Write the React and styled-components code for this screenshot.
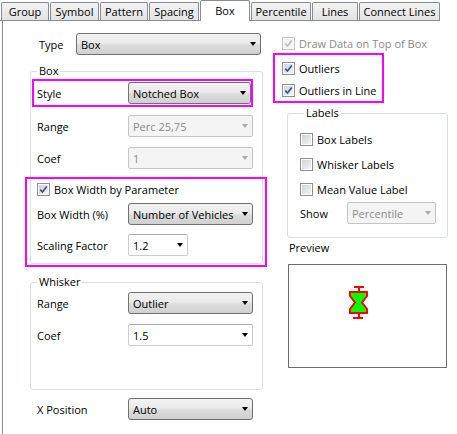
import React from 'react';
import styled, { createGlobalStyle } from 'styled-components';

const GlobalStyle = createGlobalStyle`
  html, body { margin: 0; padding: 0; background: #fff; }
  body {
    font-family: 'Segoe UI', 'Open Sans', 'Noto Sans', sans-serif;
    font-size: 11px;
    color: #000;
  }
  * { box-sizing: border-box; }
`;

const tabs = [
  { name: 'Group', width: 48 },
  { name: 'Symbol', width: 49 },
  { name: 'Pattern', width: 48 },
  { name: 'Spacing', width: 50 },
  { name: 'Box', width: 50, active: true },
  { name: 'Percentile', width: 60 },
  { name: 'Lines', width: 46 },
  { name: 'Connect Lines', width: 81 },
];

const Page = styled.div`
  width: 457px;
  height: 434px;
  overflow: hidden;
`;

const TabStrip = styled.div`
  display: flex;
  align-items: flex-end;
  gap: 1px;
  width: 440px;
  height: 21px;
  padding-left: 1px;
  border-bottom: 1px solid #898c95;
`;

const Tab = styled.div`
  width: ${p => p.$width}px;
  height: ${p => (p.$active ? 21 : 18)}px;
  margin-bottom: ${p => (p.$active ? -1 : 0)}px;
  display: flex;
  align-items: ${p => (p.$active ? 'flex-start' : 'center')};
  justify-content: center;
  padding-top: ${p => (p.$active ? 2 : 0)}px;
  border: 1px solid #898c95;
  border-bottom: none;
  border-radius: 2px 2px 0 0;
  background: ${p => (p.$active ? '#fff' : 'linear-gradient(#f3f3f3, #e3e3e3)')};
  position: relative;
  z-index: ${p => (p.$active ? 1 : 0)};
  white-space: nowrap;
`;

const Panel = styled.div`
  display: grid;
  grid-template-columns: 270px 1fr;
  margin-left: 2px;
  min-height: 413px;
  border-left: 1px solid #898c95;
`;

const LeftCol = styled.div`
  display: flex;
  flex-direction: column;
  align-items: flex-start;
  padding: 12px 0 0 27px;
`;

const RightCol = styled.div`
  display: flex;
  flex-direction: column;
  align-items: flex-start;
  padding-top: 15px;
`;

const Row = styled.div`
  display: grid;
  grid-template-columns: ${p => p.$label}px auto;
  align-items: center;
  height: ${p => p.$h || 22}px;
  margin-top: ${p => p.$mt || 0}px;
  padding-left: ${p => p.$pl || 0}px;
  white-space: nowrap;
`;

const Group = styled.fieldset`
  width: ${p => p.$width}px;
  margin: ${p => p.$mt || 0}px 0 0 ${p => p.$ml || 0}px;
  padding: ${p => p.$pad || '0'};
  border: 1px solid #d5dfe5;
  border-radius: 3px;
  min-width: 0;
`;

const Legend = styled.legend`
  margin-left: ${p => p.$ml}px;
  padding: 0 2px;
  line-height: 14px;
`;

const Highlight = styled.div`
  border: 2px solid #ff00ff;
  margin: ${p => p.$margin};
  padding: ${p => p.$pad};
  width: ${p => (p.$width ? `${p.$width}px` : 'auto')};
`;

const comboLook = {
  button: {
    border: '#707070',
    bg: 'linear-gradient(#f2f2f2 0%, #eaeaea 45%, #dcdcdc 55%, #d0d0d0 100%)',
    color: '#000',
    arrow: '#000',
    radius: 3,
  },
  edit: {
    border: '#c9ccd1',
    bg: '#fff',
    color: '#000',
    arrow: '#000',
    radius: 2,
  },
  disabled: {
    border: '#c3c6c9',
    bg: '#f4f4f4',
    color: '#8a8a8a',
    arrow: '#a8a8a8',
    radius: 2,
  },
};

const Combo = styled.div`
  width: ${p => p.$width}px;
  height: 22px;
  display: flex;
  align-items: center;
  padding: 0 4px 0 4px;
  border: 1px solid ${p => comboLook[p.$look].border};
  border-top-color: ${p => (p.$look === 'edit' ? '#abadb3' : comboLook[p.$look].border)};
  border-radius: ${p => comboLook[p.$look].radius}px;
  background: ${p => comboLook[p.$look].bg};
  color: ${p => comboLook[p.$look].color};
`;

const ComboText = styled.span`
  flex: 1;
  overflow: hidden;
  white-space: nowrap;
`;

const Arrow = styled.span`
  flex-shrink: 0;
  width: 0;
  height: 0;
  margin-left: 3px;
  border-left: 3.5px solid transparent;
  border-right: 3.5px solid transparent;
  border-top: 4px solid ${p => comboLook[p.$look].arrow};
`;

const Check = styled.label`
  display: flex;
  align-items: center;
  gap: 4px;
  height: 14px;
  margin-top: ${p => p.$mt || 0}px;
  margin-left: ${p => p.$ml || 0}px;
  color: ${p => (p.$disabled ? '#8a8a8a' : '#000')};
  white-space: nowrap;
`;

const CheckBox = styled.span`
  width: 13px;
  height: 13px;
  flex-shrink: 0;
  display: flex;
  align-items: center;
  justify-content: center;
  border: 1px solid ${p => (p.$disabled ? '#c5c5c5' : '#8e8f8f')};
  box-shadow: inset 0 0 0 1px #fff;
  background: ${p => (p.$disabled ? '#f4f4f4' : 'linear-gradient(135deg, #cdd0d5, #f7f7f7)')};
`;

const Label = styled.span`
  line-height: 14px;
  margin: ${p => p.$margin || 0};
`;

const Preview = styled.div`
  width: 159px;
  height: 104px;
  margin: 9px 0 0 15px;
  padding: 21px 0 0 60px;
  border: 1px solid #6e6e6e;
`;

const Dropdown = ({ width, look = 'button', children }) => (
  <Combo $width={width} $look={look}>
    <ComboText>{children}</ComboText>
    <Arrow $look={look} />
  </Combo>
);

const CheckItem = ({ checked, disabled, children, mt, ml }) => (
  <Check $disabled={disabled} $mt={mt} $ml={ml}>
    <CheckBox $disabled={disabled}>
      {checked && (
        <svg width="9" height="9" viewBox="0 0 9 9">
          <path
            d="M1.2 4.6 L3.5 7 L7.8 1.4"
            fill="none"
            stroke={disabled ? '#bdbdbd' : '#40528a'}
            strokeWidth="1.7"
          />
        </svg>
      )}
    </CheckBox>
    {children}
  </Check>
);

const NotchedBoxIcon = () => (
  <svg width="20" height="34" viewBox="0 0 20 34">
    <line x1="5" y1="1" x2="15" y2="1" stroke="#ff0000" strokeWidth="2" />
    <line x1="10" y1="2" x2="10" y2="6" stroke="#ff0000" strokeWidth="2" />
    <polygon
      points="1,6 18,6 18,10 13,16.5 18,23 18,27 1,27 1,23 6,16.5 1,10"
      fill="#00ff00"
      stroke="#ff0000"
      strokeWidth="2"
    />
    <line x1="10" y1="28" x2="10" y2="31" stroke="#ff0000" strokeWidth="2" />
    <line x1="4" y1="32" x2="14" y2="32" stroke="#ff0000" strokeWidth="2" />
  </svg>
);

export default function App() {
  return (
    <Page>
      <GlobalStyle />
      <TabStrip>
        {tabs.map(t => (
          <Tab key={t.name} $width={t.width} $active={t.active}>
            {t.name}
          </Tab>
        ))}
      </TabStrip>
      <Panel>
        <LeftCol>
          <Row $label={37} $pl={9}>
            <span>Type</span>
            <Dropdown width={185}>Box</Dropdown>
          </Row>

          <Group $width={233} $mt={9}>
            <Legend $ml={6}>Box</Legend>
            <Highlight $margin="1px 9px 0 1px" $pad="0 0 0 3px">
              <Row $label={91} $h={24}>
                <span>Style</span>
                <Dropdown width={123}>Notched Box</Dropdown>
              </Row>
            </Highlight>
            <Row $label={91} $pl={6} $mt={8}>
              <span>Range</span>
              <Dropdown width={125} look="disabled">Perc 25,75</Dropdown>
            </Row>
            <Row $label={91} $pl={6} $mt={10}>
              <span>Coef</span>
              <Dropdown width={125} look="disabled">1</Dropdown>
            </Row>
            <Highlight $margin="8px -5px -4px -6px" $pad="3px 12px 9px 10px">
              <CheckItem checked>Box Width by Parameter</CheckItem>
              <Row $label={91} $mt={7}>
                <span>Box Width (%)</span>
                <Dropdown width={125}>Number of Vehicles</Dropdown>
              </Row>
              <Row $label={91} $mt={9}>
                <span>Scaling Factor</span>
                <Dropdown width={60} look="edit">1.2</Dropdown>
              </Row>
            </Highlight>
          </Group>

          <Group $width={233} $mt={11} $pad="0 0 43px 0">
            <Legend $ml={6}>Whisker</Legend>
            <Row $label={91} $pl={6} $mt={3}>
              <span>Range</span>
              <Dropdown width={125}>Outlier</Dropdown>
            </Row>
            <Row $label={91} $pl={6} $mt={10}>
              <span>Coef</span>
              <Dropdown width={125} look="edit">1.5</Dropdown>
            </Row>
          </Group>

          <Row $label={91} $pl={7} $mt={8}>
            <span>X Position</span>
            <Dropdown width={125}>Auto</Dropdown>
          </Row>
        </LeftCol>

        <RightCol>
          <CheckItem checked disabled ml={9}>Draw Data on Top of Box</CheckItem>
          <Highlight $margin="3px 0 0 0" $pad="6px 0 4px 7px" $width={111}>
            <CheckItem checked>Outliers</CheckItem>
            <CheckItem checked mt={8}>Outliers in Line</CheckItem>
          </Highlight>

          <Group $width={161} $mt={3} $ml={14} $pad="12px 0 13px 12px">
            <Legend $ml={4}>Labels</Legend>
            <CheckItem>Box Labels</CheckItem>
            <CheckItem mt={11}>Whisker Labels</CheckItem>
            <CheckItem mt={11}>Mean Value Label</CheckItem>
            <Row $label={47} $mt={6}>
              <span>Show</span>
              <Dropdown width={89} look="disabled">Percentile</Dropdown>
            </Row>
          </Group>

          <Label $margin="3px 0 0 16px">Preview</Label>
          <Preview>
            <NotchedBoxIcon />
          </Preview>
        </RightCol>
      </Panel>
    </Page>
  );
}
